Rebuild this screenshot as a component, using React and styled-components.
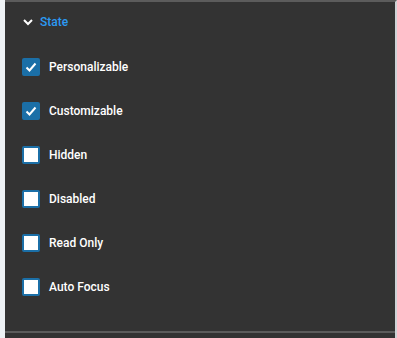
import React from 'react';
import styled, { createGlobalStyle } from 'styled-components';

const GlobalStyle = createGlobalStyle`
	html, body {
		margin: 0;
		padding: 0;
		background: #eef2f5;
	}
`

const Page = styled.div`
	display: flex;
	width: 397px;
	height: 338px;
	padding-left: 5px;
	box-sizing: border-box;
	background: #eef2f5;
`

const Panel = styled.div`
	flex: 1;
	display: flex;
	flex-direction: column;
	background: #333333;
	border-top: 2px solid #5c5c5c;
	border-right: 2px solid #cfd3d6;
	font-family: Roboto, "Noto Sans", sans-serif;
`

const Section = styled.div`
	height: 331px;
	border-bottom: 2px solid #5c5c5c;
	box-sizing: border-box;
	padding: 11px 0 0 17px;
`

const Header = styled.div`
	display: flex;
	align-items: center;
	gap: 6px;
	height: 18px;
	color: #2b9af3;
	font-size: 12px;
	font-weight: 500;
	margin-bottom: 27px;
`

const List = styled.div`
	display: flex;
	flex-direction: column;
	gap: 26px;
`

const Row = styled.label`
	display: flex;
	align-items: center;
	gap: 9px;
	height: 18px;
	color: #ffffff;
	font-size: 12px;
	font-weight: 500;
`

const Box = styled.span`
	width: 18px;
	height: 18px;
	box-sizing: border-box;
	border: 2px solid #1b6fa7;
	border-radius: 2px;
	background: ${p => (p.checked ? '#1b6fa7' : '#ffffff')};
	display: flex;
	align-items: center;
	justify-content: center;
`

const items = [
	{ label: 'Personalizable', checked: true },
	{ label: 'Customizable', checked: true },
	{ label: 'Hidden', checked: false },
	{ label: 'Disabled', checked: false },
	{ label: 'Read Only', checked: false },
	{ label: 'Auto Focus', checked: false },
]

const App = () => {
	return (
		<Page>
			<GlobalStyle />
			<Panel>
				<Section>
					<Header>
						<svg width="12" height="12" viewBox="0 0 12 12">
							<path d="M2 4 L6 8 L10 4" fill="none" stroke="#ffffff" strokeWidth="2" />
						</svg>
						State
					</Header>
					<List>
						{items.map(item => (
							<Row key={item.label}>
								<Box checked={item.checked}>
									{item.checked && (
										<svg width="12" height="12" viewBox="0 0 12 12">
											<path d="M1.5 6.5 L4.5 9.5 L10.5 2.5" fill="none" stroke="#ffffff" strokeWidth="2" />
										</svg>
									)}
								</Box>
								{item.label}
							</Row>
						))}
					</List>
				</Section>
			</Panel>
		</Page>
	)
}

export default App;
